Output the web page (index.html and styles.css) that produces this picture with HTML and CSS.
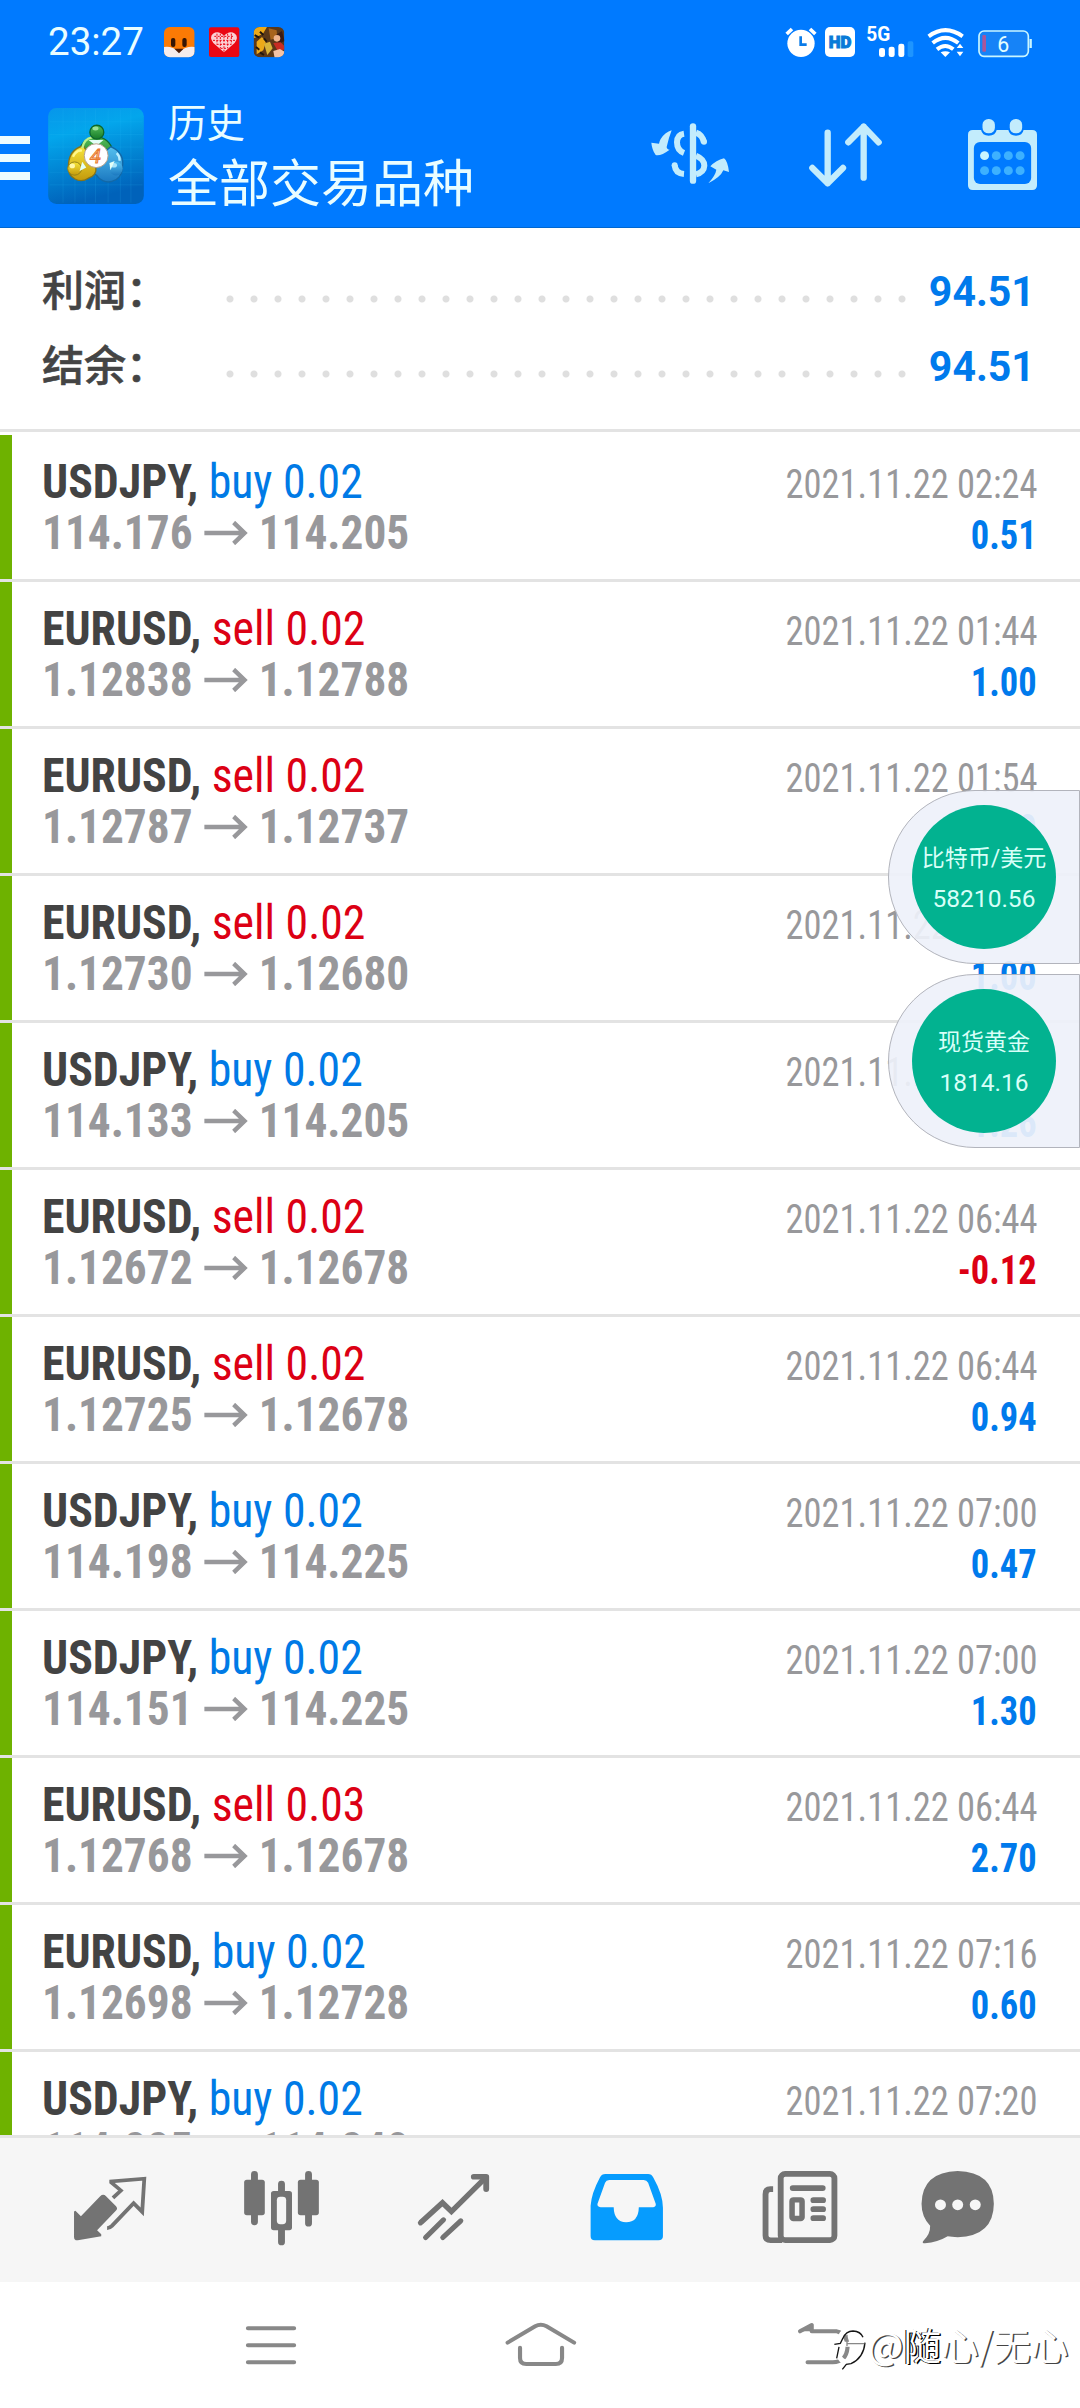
FILE: index.html
```html
<!DOCTYPE html>
<html lang="zh-CN">
<head>
<meta charset="utf-8">
<title>历史</title>
<link rel="stylesheet" href="styles.css">
</head>
<body>
<svg class="defs" width="0" height="0">
  <symbol id="arrow" viewBox="0 0 46 24"><path d="M0 12H42M31 1.5L42.5 12L31 22.5" fill="none" stroke="#98989b" stroke-width="4.6"/></symbol>
</svg>
<div class="screen">
  <header class="header">
    <div class="status">
      <span class="clock">23:27</span>
      <svg class="notices" viewBox="372 36 364 92">
        <defs><clipPath id="c1"><rect x="372" y="36" width="92" height="91" rx="18"/></clipPath><clipPath id="c3"><rect x="641" y="36" width="92" height="91" rx="18"/></clipPath></defs>
        <g clip-path="url(#c1)"><rect x="372" y="36" width="92" height="91" fill="#fb7a05"/><path d="M372 96Q395 92 417 110Q440 92 464 96V128H372Z" fill="#f6ecec"/><path d="M403 101H431L417 115Z" fill="#4a1a08"/><rect x="393" y="69" width="13" height="27" rx="6" fill="#351505"/><rect x="427" y="69" width="13" height="27" rx="6" fill="#351505"/></g>
        <rect x="507" y="37" width="91" height="89" rx="6" fill="#ea0713"/>
        <path d="M552 112L520 84Q507 66 519 56Q536 45 552 63Q568 45 585 56Q597 66 584 84Z" fill="#fbd0d4"/>
        <path d="M523 64l58 0M519 76h66M530 88h44M542 100h20M531 56v32M541 56v44M552 64v46M563 56v44M574 56v32" stroke="#ea0713" stroke-width="3" stroke-dasharray="6 4" fill="none"/>
        <g clip-path="url(#c3)"><rect x="641" y="36" width="92" height="91" fill="#5b3818"/><path d="M641 36h40l-12 20 -28 14zM650 80l16-14 12 14 -8 26 -20 12z" fill="#eca91a"/><path d="M672 86l18-6 8 20 -16 20z" fill="#d8b43b"/><path d="M686 40l24 6 2 22 -20 6z" fill="#a8641c"/><path d="M708 60l18-12 8 30 -18 8z" fill="#3a1a14"/><circle cx="711" cy="70" r="10" fill="#f0b48c"/><path d="M700 84l22-2 12 12v10l-22 2z" fill="#c72c24"/><path d="M700 108l20-6 14 8v18h-30z" fill="#f3c3a6"/><path d="M644 60l14 8M660 50l10 10M648 96l10 8M672 70l8 10M660 112l12 8" stroke="#20160f" stroke-width="6"/></g>
      </svg>
      <svg class="status-icons" viewBox="0 0 780 150">
        <g fill="#fff">
          <circle cx="63" cy="70" r="41"/><path d="M20 42L36 27M106 42L90 27" stroke="#fff" stroke-width="11"/><path d="M62 49V74H80" fill="none" stroke="#0a7be8" stroke-width="8"/>
          <rect x="135" y="21" width="90" height="90" rx="15"/>
          <text x="180" y="85" text-anchor="middle" textLength="68" lengthAdjust="spacingAndGlyphs" font-size="52" font-weight="900" style="fill:#087bd8;stroke:#087bd8;stroke-width:3">HD</text>
          <text x="259" y="64" textLength="72" lengthAdjust="spacingAndGlyphs" font-size="58" font-weight="700">5G</text>
          <rect x="297" y="84" width="18" height="27" rx="7"/><rect x="326" y="80" width="18" height="31" rx="7"/><rect x="355" y="71" width="18" height="40" rx="7"/><rect x="383" y="64" width="17" height="47" rx="5" fill="#1e95ff"/>
          <path d="M446 49Q496 12 548 49M458 69Q496 38 535 69M471 88Q496 68 520 88" fill="none" stroke="#fff" stroke-width="12"/>
          <path d="M482 97Q496 90 510 97L496 111ZM530 84L540 71L550 84ZM530 95H550L540 109Z"/>
        </g>
        <rect x="597" y="33" width="148" height="76" rx="15" fill="#1683f7" stroke="#c9f6ff" stroke-width="5"/><path d="M752 57V84" stroke="#c9f6ff" stroke-width="7"/><rect x="607" y="45" width="11" height="50" rx="3" fill="#a9569b"/>
        <text x="670" y="95" text-anchor="middle" font-size="64" fill="#e4ffff">6</text>
      </svg>
    </div>
    <div class="toolbar">
      <div class="burger"><i></i><i></i><i></i></div>
      <svg class="logo" viewBox="24 278 289 290">
        <defs>
          <linearGradient id="bg" x1="0" y1="0" x2=".25" y2="1"><stop offset="0" stop-color="#0796ea"/><stop offset=".3" stop-color="#03a6ec"/><stop offset="1" stop-color="#0062ba"/></linearGradient>
          <linearGradient id="gg" x1="0" y1="0" x2="0" y2="1"><stop offset="0" stop-color="#57bd5b"/><stop offset="1" stop-color="#147b28"/></linearGradient>
          <linearGradient id="yy" x1="0" y1="0" x2="0" y2="1"><stop offset="0" stop-color="#f8e63b"/><stop offset="1" stop-color="#c39a0c"/></linearGradient>
          <linearGradient id="bb" x1="0" y1="0" x2="0" y2="1"><stop offset="0" stop-color="#54c0ef"/><stop offset="1" stop-color="#1b78c0"/></linearGradient>
        </defs>
        <rect x="24" y="278" width="289" height="290" rx="25" fill="url(#bg)"/>
        <path d="M69 282V564M105 282V564M136 282V564M167 282V564M205 282V564M242 282V564M274 282V564M28 320H309M28 358H309M28 396H309M28 434H309M28 472H309M28 510H309" stroke="#34bdf5" stroke-opacity=".22" stroke-width="2"/>
        <path d="M118 425V410A51 51 0 0 1 219 408Q218 435 198 444Z" fill="url(#gg)" stroke="#0d6934" stroke-width="4"/>
        <path d="M213 395Q257 414 248 460A42 42 0 0 1 170 481Q147 475 150 449Z" fill="url(#bb)" stroke="#1268a7" stroke-width="4"/>
        <path d="M130 392Q84 404 85 458A38 38 0 0 0 145 490Q172 482 168 455Z" fill="url(#yy)" stroke="#877418" stroke-width="4"/>
        <path d="M127 399Q132 371 157 367" stroke="#b9f28e" stroke-width="7" fill="none"/><path d="M99 425Q110 403 126 407" stroke="#fff88c" stroke-width="7" fill="none"/><path d="M231 414Q240 422 240 437" stroke="#b8edff" stroke-width="7" fill="none"/>
        <circle cx="171" cy="351" r="21" fill="url(#gg)" stroke="#0e672b" stroke-width="4"/><ellipse cx="167" cy="340" rx="9" ry="6" fill="#9be199"/>
        <ellipse cx="104" cy="461" rx="21" ry="20" fill="url(#yy)" stroke="#94831a" stroke-width="3"/><ellipse cx="97" cy="453" rx="8" ry="7" fill="#fff8a9"/>
        <ellipse cx="229" cy="461" rx="20" ry="21" fill="url(#bb)"/><ellipse cx="223" cy="451" rx="9" ry="7" fill="#a8e4fb"/>
        <path d="M146 375H191L170 393ZM127 440L139 458L119 468ZM209 444L225 438L212 466Z" fill="#e3fff7"/>
        <circle cx="169" cy="422" r="36" fill="#fff" stroke="#b6a18c" stroke-width="3"/>
        <text x="167" y="443" text-anchor="middle" font-size="60" font-style="italic" fill="#ffd9b0" stroke="#e8792f" stroke-width="3">4</text>
      </svg>
      <div class="titles"><span class="title-small">历史</span><span class="title-big">全部交易品种</span></div>
      <svg class="tool money" viewBox="30 70 240 185" fill="#c3ecfc">
        <path d="M95 92Q76 97 62 118Q58 125 57 132L34 129Q36 151 47 166Q62 170 89 150Q80 149 80 142Q87 112 95 92ZM205 251Q227 226 229 210L211 200Q228 182 252 176Q263 184 267 217L250 212Q242 232 205 251Z"/>
        <path d="M132 102Q111 105 111 128Q111 152 132 160M104 197Q106 221 132 223M168 99Q188 106 192 129M168 168Q193 178 193 198Q192 218 168 224" fill="none" stroke="#c3ecfc" stroke-width="18"/><circle cx="192" cy="126" r="9"/><circle cx="104" cy="197" r="9"/>
        <path d="M159 80V243" stroke="#c3ecfc" stroke-width="19" stroke-linecap="round"/>
      </svg>
      <svg class="tool sort" viewBox="505 70 225 193" fill="none" stroke="#c3ecfc" stroke-width="19" stroke-linecap="round" stroke-linejoin="round"><path d="M564 99V251M518 205L564 251L610 205M672 234V81M626 128L672 81L717 128"/></svg>
      <svg class="tool calendar" viewBox="1243 357 200 213" preserveAspectRatio="none">
        <path d="M1257 390H1281Q1284 407 1303 407Q1323 407 1326 390H1360Q1363 407 1382 407Q1401 407 1404 390H1429Q1443 390 1443 404V556Q1443 570 1429 570H1257Q1243 570 1243 556V404Q1243 390 1257 390Z" fill="#c3ecfc"/>
        <rect x="1260" y="426" width="166" height="126" rx="18" fill="#007aff"/><rect x="1285" y="357" width="36" height="43" rx="17" fill="#c3ecfc"/><rect x="1364" y="357" width="36" height="43" rx="17" fill="#c3ecfc"/>
        <g fill="#3db1ff"><circle cx="1291" cy="467" r="13" fill="#c8f5ff"/><circle cx="1325" cy="467" r="13"/><circle cx="1360" cy="467" r="13"/><circle cx="1394" cy="467" r="13"/><circle cx="1291" cy="512" r="13"/><circle cx="1325" cy="512" r="13"/><circle cx="1360" cy="512" r="13"/><circle cx="1394" cy="512" r="13"/></g>
      </svg>
    </div>
  </header>

  <section class="summary">
    <div class="sum-row"><span class="label">利润：</span><span class="dots"></span><b>94.51</b></div>
    <div class="sum-row"><span class="label">结余：</span><span class="dots"></span><b>94.51</b></div>
  </section>

  <main class="deals">
    <article class="deal"><div class="left"><div class="name">USDJPY, <span class="buy">buy 0.02</span></div><div class="prices">114.176<svg><use href="#arrow"/></svg>114.205</div></div><div class="right"><time>2021.11.22 02:24</time><b>0.51</b></div></article>
    <article class="deal"><div class="left"><div class="name">EURUSD, <span class="sell">sell 0.02</span></div><div class="prices">1.12838<svg><use href="#arrow"/></svg>1.12788</div></div><div class="right"><time>2021.11.22 01:44</time><b>1.00</b></div></article>
    <article class="deal"><div class="left"><div class="name">EURUSD, <span class="sell">sell 0.02</span></div><div class="prices">1.12787<svg><use href="#arrow"/></svg>1.12737</div></div><div class="right"><time>2021.11.22 01:54</time><b>1.00</b></div></article>
    <article class="deal"><div class="left"><div class="name">EURUSD, <span class="sell">sell 0.02</span></div><div class="prices">1.12730<svg><use href="#arrow"/></svg>1.12680</div></div><div class="right"><time>2021.11.22 01:57</time><b>1.00</b></div></article>
    <article class="deal"><div class="left"><div class="name">USDJPY, <span class="buy">buy 0.02</span></div><div class="prices">114.133<svg><use href="#arrow"/></svg>114.205</div></div><div class="right"><time>2021.11.22 02:24</time><b>1.26</b></div></article>
    <article class="deal"><div class="left"><div class="name">EURUSD, <span class="sell">sell 0.02</span></div><div class="prices">1.12672<svg><use href="#arrow"/></svg>1.12678</div></div><div class="right"><time>2021.11.22 06:44</time><b class="loss">-0.12</b></div></article>
    <article class="deal"><div class="left"><div class="name">EURUSD, <span class="sell">sell 0.02</span></div><div class="prices">1.12725<svg><use href="#arrow"/></svg>1.12678</div></div><div class="right"><time>2021.11.22 06:44</time><b>0.94</b></div></article>
    <article class="deal"><div class="left"><div class="name">USDJPY, <span class="buy">buy 0.02</span></div><div class="prices">114.198<svg><use href="#arrow"/></svg>114.225</div></div><div class="right"><time>2021.11.22 07:00</time><b>0.47</b></div></article>
    <article class="deal"><div class="left"><div class="name">USDJPY, <span class="buy">buy 0.02</span></div><div class="prices">114.151<svg><use href="#arrow"/></svg>114.225</div></div><div class="right"><time>2021.11.22 07:00</time><b>1.30</b></div></article>
    <article class="deal"><div class="left"><div class="name">EURUSD, <span class="sell">sell 0.03</span></div><div class="prices">1.12768<svg><use href="#arrow"/></svg>1.12678</div></div><div class="right"><time>2021.11.22 06:44</time><b>2.70</b></div></article>
    <article class="deal"><div class="left"><div class="name">EURUSD, <span class="buy">buy 0.02</span></div><div class="prices">1.12698<svg><use href="#arrow"/></svg>1.12728</div></div><div class="right"><time>2021.11.22 07:16</time><b>0.60</b></div></article>
    <article class="deal"><div class="left"><div class="name">USDJPY, <span class="buy">buy 0.02</span></div><div class="prices">114.225<svg><use href="#arrow"/></svg>114.240</div></div><div class="right"><time>2021.11.22 07:20</time></div></article>
  </main>

  <nav class="tabs">
    <svg viewBox="69.7 234 499.5 431" preserveAspectRatio="none"><path d="M219 452L235 468L291 408Q300 400 308 408L337 438Q343 445 337 451L282 510L294 522V528L226 540Q215 541 215 530V454Z" fill="#737373"/><path d="M328 413L351 391L323 367V364L419 356L413 455L388 429L325 497Q318 504 311 504" fill="none" stroke="#737373" stroke-width="11"/></svg>
    <svg viewBox="569.2 234 499.5 431" preserveAspectRatio="none"><g stroke="#737373" stroke-width="20" stroke-linecap="round"><path d="M739 343V485M896 343V489M817.500 372V400M817.500 505V545"/></g><g fill="#737373"><rect x="709" y="359" width="60" height="106" rx="8"/><rect x="865" y="359" width="61" height="106" rx="8"/><rect x="787" y="393" width="61" height="117" rx="8"/></g><rect x="804" y="410" width="27" height="82" rx="10" fill="#f6f6f6"/></svg>
    <svg viewBox="1068.7 234 499.5 431" preserveAspectRatio="none" fill="none" stroke="#737373" stroke-linecap="round"><path d="M1222 487L1285 428L1311 454L1411 352" stroke-width="16" stroke-linecap="butt"/><path d="M1221 488L1222 487" stroke-width="15"/><path d="M1376 350H1412V387" stroke-width="17" stroke-linejoin="round"/><path d="M1236 532L1288 479M1286 532L1338 482" stroke-width="15"/></svg>
    <svg viewBox="0 234 499.5 431" preserveAspectRatio="none"><path d="M190 342H314Q324 342 329 352Q357 403 357 443V528Q357 540 344 540H159Q147 540 147 528V437Q149 400 174 352Q179 342 190 342Z" fill="#069cfe"/><path d="M201 360H301Q310 360 314 368L336 431Q338 440 329 441H287Q286 486 250 486Q215 485 214 441H176Q165 440 167 431L189 368Q192 360 201 360Z" fill="#f6f6f6"/></svg>
    <svg viewBox="499.5 234 499.5 431" preserveAspectRatio="none" fill="none" stroke="#737373"><rect x="699" y="341.500" width="156" height="198" rx="13" stroke-width="17"/><path d="M677 387H669Q655 387 655 402V526Q655 540 670 540H703" stroke-width="17"/><path d="M734 384H821M794 420H822M794 447H822M794 474H822" stroke-width="17" stroke-linecap="round"/><rect x="732" y="419" width="29" height="56" rx="4" stroke-width="16"/></svg>
    <svg viewBox="999 234 499.5 431" preserveAspectRatio="none"><path d="M1213 333Q1317 336 1318 431Q1317 528 1213 531Q1195 530 1184 528Q1155 546 1118 549Q1108 549 1113 542Q1134 522 1133 497Q1108 470 1108 431Q1110 336 1213 333Z" fill="#737373"/><g fill="#f6f6f6"><circle cx="1163" cy="434" r="16"/><circle cx="1213" cy="434" r="16"/><circle cx="1264" cy="434" r="16"/></g></svg>
  </nav>
  <nav class="system">
    <svg viewBox="392 665 784 378" preserveAspectRatio="none"><path d="M720 804H854M720 855H854M720 906H854" stroke="#888" stroke-width="12" stroke-linecap="round"/></svg>
    <svg viewBox="1176 665 784 378" preserveAspectRatio="none"><path d="M1474 847L1554 798Q1570 789 1587 798L1667 847M1510 862V893Q1510 911 1528 911H1614Q1632 911 1632 893V862" fill="none" stroke="#888" stroke-width="12" stroke-linecap="round"/></svg>
    <svg viewBox="392 665 784 378" preserveAspectRatio="none"><path d="M755 813L789 794V813H862Q893 820 893 862Q889 905 850 906H777" fill="none" stroke="#888" stroke-width="12" stroke-linecap="round" stroke-linejoin="round"/><path d="M755 813L789 794V813Z" fill="#888"/></svg>
  </nav>

  <aside class="bubble bitcoin"><div><span>比特币/美元</span><em>58210.56</em></div></aside>
  <aside class="bubble gold"><div><span>现货黄金</span><em>1814.16</em></div></aside>
  <div class="watermark">
    <svg viewBox="40 85 105 130"><path d="M58 138Q60 92 96 92Q136 95 138 139Q134 185 82 193L68 206L75 190Q51 178 54 145M46 137H132" fill="none" stroke="#fff" stroke-width="15"/><path d="M69 120Q79 97 100 97Q123 98 130 116M136 132Q132 178 94 195L80 197L68 212M44 137L62 134L69 120M58 145L51 179" fill="none" stroke="#161616" stroke-width="4"/><path d="M82 108V142M82 135H134" fill="none" stroke="#888" stroke-width="4"/></svg>
    <span>@<strong>随</strong>心/无心</span>
  </div>
</div>
</body>
</html>
```
FILE: styles.css
```css
* { box-sizing: border-box; }
body { margin: 0; background: #fff; }
.defs { position: absolute; }
svg { display: block; flex: none; }
.screen {
  position: relative;
  width: 1080px;
  height: 2408px;
  overflow: hidden;
  display: flex;
  flex-direction: column;
  font-family: Roboto, "Noto Sans CJK SC", sans-serif;
}

.header { height: 228px; flex: none; background: #007aff; color: #e9fdff; border-bottom: 1px solid #0067d0; }
.status { display: flex; height: 80px; padding: 20px 40px 0 48px; align-items: flex-start; }
.clock { width: 116px; font-size: 38.5px; line-height: 44px; }
.notices { width: 121.3px; height: 30.7px; margin-top: 7px; }
.status-icons { width: 260px; height: 50px; margin-left: auto; }
.toolbar { display: flex; align-items: flex-start; }
.burger { width: 30px; margin: 56px 18px 0 0; display: flex; flex-direction: column; gap: 10px; }
.burger i { height: 8px; background: #eefcff; }
.logo { width: 96px; height: 96px; margin-top: 28px; }
.titles { display: flex; flex-direction: column; margin: 15px 0 0 24px; font-family: "Noto Sans CJK SC", sans-serif; font-weight: 400; }
.title-small { font-size: 38.5px; line-height: 50px; height: 50px; }
.title-big { font-size: 51px; line-height: 70px; height: 70px; }
.tool { margin-top: 43px; }
.money { width: 80px; height: 61.7px; margin-left: auto; }
.sort { width: 75px; height: 64.3px; margin-left: 78px; }
.calendar { width: 69px; height: 71px; margin: 39px 43px 0 85px; }

.summary { height: 204px; flex: none; padding: 24px 45px 0 42px; border-bottom: 3px solid #e3e3e3; background: #fff; }
.sum-row { display: flex; height: 75px; align-items: center; }
.label {
  width: 184px;
  margin-top: -4px;
  font: 500 42px/75px "Noto Sans CJK SC", sans-serif;
  color: #444;
  -webkit-text-stroke: .6px #444;
}
.dots {
  width: 696px;
  height: 8px;
  margin-top: 18px;
  background: radial-gradient(circle at 4px 4px, #dfdfdf 3px, transparent 4px) 0 0 / 24px 8px repeat-x;
}
.sum-row b { margin: 3px 0 0 auto; font-size: 42.5px; color: #007aec; transform: scaleX(.965); transform-origin: right; }

.deals { height: 1703px; flex: none; padding-top: 3px; overflow: hidden; font-family: "Roboto Condensed", Roboto, sans-serif; }
.deal {
  display: flex;
  justify-content: space-between;
  height: 147px;
  padding: 0 42px;
  border-bottom: 3px solid #e3e3e3;
  background: linear-gradient(to right, #6eb200 12px, #fff 12px);
}
.left { padding-top: 21px; font-size: 48px; line-height: 51px; white-space: nowrap; }
.name { color: #434343; font-weight: 700; transform: scaleX(.954); transform-origin: left; }
.name span { font-weight: 400; }
.buy { color: #007ae6; }
.sell { color: #dc0014; }
.prices { display: flex; align-items: center; color: #98989b; font-weight: 700; transform: scaleX(.944); transform-origin: left; }
.prices svg { width: 48px; height: 24px; margin: 0 11px; }
/* 行情时间与盈亏使用更窄的字形 */
.right { display: flex; flex-direction: column; align-items: flex-end; padding-top: 24px; font-size: 40px; line-height: 51px; transform: scaleX(.911); transform-origin: right; }
.right time { color: #98989b; }
.right b { color: #007aec; margin-right: 1px; }
.right .loss { color: #dc0014; }

.tabs { display: flex; height: 147px; flex: none; padding: 0 24px; border-top: 3px solid #e4e4e4; background: #f6f6f6; }
.tabs svg { width: 172px; height: 144px; }
.system { display: flex; height: 126px; flex: none; padding-left: 135px; }
.system svg { width: 270px; height: 126px; }

.bubble {
  position: absolute;
  left: 888px;
  width: 192px;
  height: 174px;
  padding: 14px 0 0 23px;
  border: 1px solid #b2b4bc;
  border-radius: 87px 0 0 87px;
  background: rgba(238, 241, 250, .92);
}
.bitcoin { top: 790px; }
.gold { top: 974px; }
.bubble div {
  width: 144px;
  height: 144px;
  border-radius: 50%;
  background: #02b290;
  color: #d7fff8;
  display: flex;
  flex-direction: column;
  align-items: center;
  padding-top: 34px;
  white-space: nowrap;
}
.bubble span { font-size: 23px; line-height: 40px; }
.bubble em { font-style: normal; font-size: 24.5px; line-height: 40px; }

.watermark { position: absolute; left: 833px; top: 2317px; display: flex; align-items: center; }
.watermark svg { width: 35px; height: 43.3px; margin-top: 10px; }
.watermark span {
  font: 400 37.5px/52px "Noto Sans CJK SC", sans-serif;
  color: #fff;
  text-shadow: 1.5px 1px 0 #444;
}
.watermark strong { font-weight: 400; text-shadow: 1.5px 1px 0 #000, -1px 0 0 #000; }
```
